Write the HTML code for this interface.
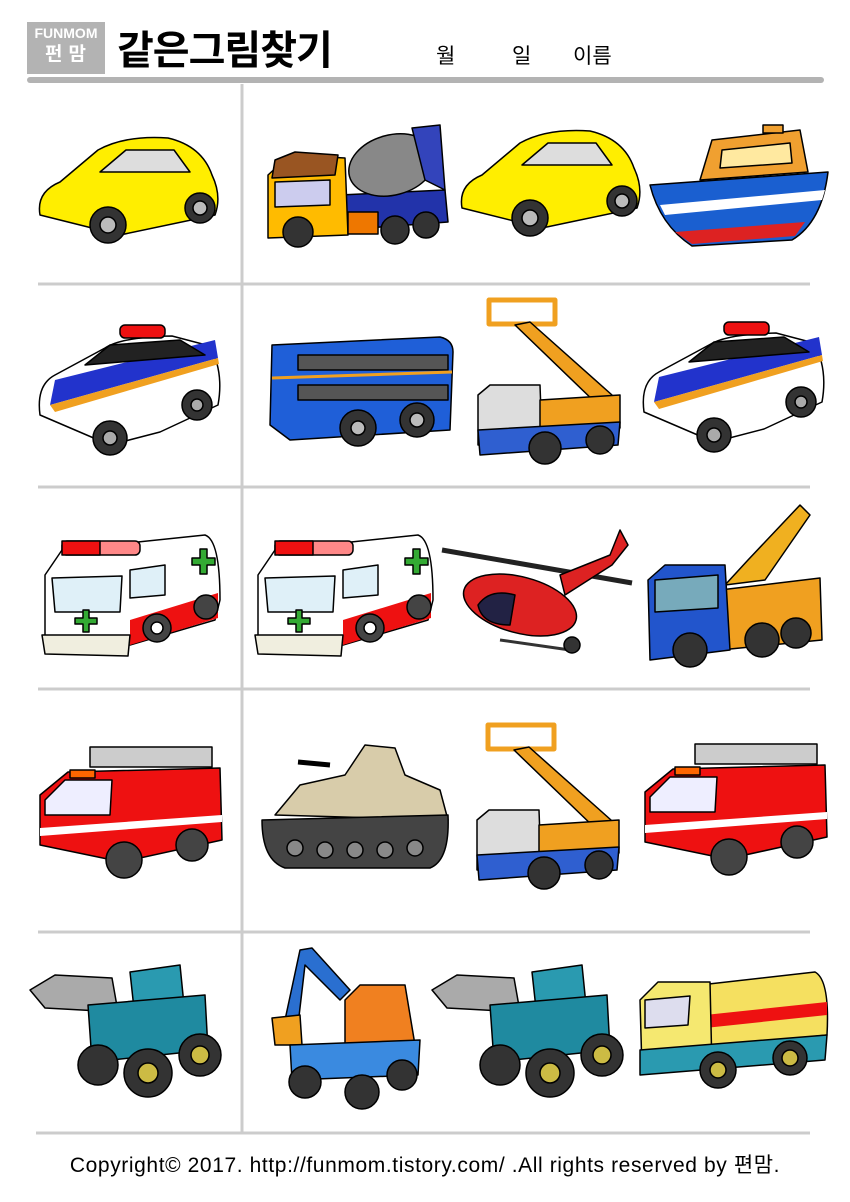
<!DOCTYPE html>
<html><head><meta charset="utf-8"><style>
body{margin:0;width:850px;height:1202px;background:#fff;position:relative;overflow:hidden;font-family:"Liberation Sans","Noto Sans CJK KR",sans-serif}
.logo{position:absolute;left:27px;top:22px;width:78px;height:52px;background:#b3b3b3;color:#fff;text-align:center}
.logo .a{font-size:14px;line-height:18px;margin-top:2px;font-weight:bold}
.logo .b{font-size:19px;font-weight:bold;letter-spacing:6px;line-height:26px;margin-left:5px}
.title{position:absolute;left:117px;top:18px;font-size:40px;font-weight:bold;letter-spacing:-1px}
.hd{position:absolute;top:40px;font-size:21px}
.foot{position:absolute;left:0;width:850px;top:1149px;text-align:center;font-size:21px;letter-spacing:0.6px}
svg{position:absolute;left:0;top:0}
</style></head><body>
<div class="logo"><div class="a">FUNMOM</div><div class="b">펀맘</div></div>
<div class="title">같은그림찾기</div>
<div class="hd" style="left:436px">월</div>
<div class="hd" style="left:512px">일</div>
<div class="hd" style="left:573px">이름</div>
<div class="foot">Copyright© 2017. http://funmom.tistory.com/ .All rights reserved by 편맘.</div>
<svg width="850" height="1202" stroke="#000" stroke-width="1.5" stroke-linejoin="round">
<rect x="27" y="77" width="797" height="6" rx="3" fill="#b3b3b3" stroke="none"/>
<g stroke="#ccc" stroke-width="3"><line x1="242" y1="84" x2="242" y2="1132"/>
<line x1="38" y1="284" x2="810" y2="284"/><line x1="38" y1="487" x2="810" y2="487"/><line x1="38" y1="689" x2="810" y2="689"/><line x1="38" y1="932" x2="810" y2="932"/><line x1="36" y1="1133" x2="810" y2="1133"/></g>

<g id="car"><path d="M40,215 Q36,192 60,182 L98,150 Q125,135 168,138 Q202,146 212,175 Q222,196 215,215 L120,235 Z" fill="#ffee00"/>
<path d="M100,172 L126,150 L174,150 L190,172 Z" fill="#ddd"/>
<circle cx="108" cy="225" r="18" fill="#333"/><circle cx="108" cy="225" r="8" fill="#bbb"/>
<circle cx="200" cy="208" r="15" fill="#333"/><circle cx="200" cy="208" r="7" fill="#bbb"/></g>
<use href="#car" transform="translate(422,-7)"/>

<path d="M340,195 L445,190 L448,222 L340,230 Z" fill="#2233aa"/>
<ellipse cx="392" cy="165" rx="44" ry="30" fill="#888" transform="rotate(-15 392 165)"/>
<path d="M412,128 L440,125 L445,190 L425,180 Z" fill="#3344bb"/>
<path d="M268,175 L290,155 L345,158 L348,235 L268,238 Z" fill="#ffbb00"/>
<path d="M275,160 L295,152 L338,155 L335,175 L272,178 Z" fill="#995522"/>
<path d="M275,182 L330,180 L330,205 L275,207 Z" fill="#cce"/>
<rect x="348" y="212" width="30" height="22" fill="#ee7700"/>
<circle cx="298" cy="232" r="15" fill="#333"/><circle cx="395" cy="230" r="14" fill="#333"/><circle cx="426" cy="225" r="13" fill="#333"/>

<path d="M650,185 L828,172 Q822,222 792,240 L692,246 Q660,225 650,185 Z" fill="#1a5fd0"/>
<path d="M660,205 L825,190 L822,200 L665,215 Z" fill="#fff" stroke="none"/>
<path d="M675,232 L805,222 L795,236 L692,244 Z" fill="#dd2222" stroke="none"/>
<path d="M700,180 L712,140 L800,130 L808,172 Z" fill="#f0a030"/>
<rect x="763" y="125" width="20" height="8" fill="#f0a030"/>
<path d="M722,150 L790,143 L792,163 L720,168 Z" fill="#ffe9a0"/>

<g id="pol"><path d="M40,415 Q36,385 55,375 L105,348 Q122,337 172,336 L210,346 Q224,372 218,405 L160,432 L110,445 Z" fill="#fff"/>
<path d="M55,380 L215,340 L218,358 L50,405 Z" fill="#2233cc" stroke="none"/>
<path d="M50,405 L218,358 L219,364 L55,412 Z" fill="#f0a020" stroke="none"/>
<path d="M85,365 L110,345 L180,340 L205,355 Z" fill="#222"/>
<rect x="120" y="325" width="45" height="13" rx="5" fill="#e11"/>
<circle cx="110" cy="438" r="17" fill="#333"/><circle cx="110" cy="438" r="7" fill="#aaa"/>
<circle cx="197" cy="405" r="15" fill="#333"/><circle cx="197" cy="405" r="6" fill="#aaa"/></g>
<use href="#pol" transform="translate(604,-3)"/>

<path d="M272,345 L440,337 Q453,340 453,352 L450,430 L290,440 L270,425 Z" fill="#1f5fd8"/>
<rect x="298" y="355" width="150" height="15" fill="#555"/>
<line x1="272" y1="378" x2="452" y2="372" stroke="#f0a020" stroke-width="3"/>
<rect x="298" y="385" width="150" height="15" fill="#555"/>
<circle cx="358" cy="428" r="18" fill="#333"/><circle cx="358" cy="428" r="7" fill="#bbb"/>
<circle cx="417" cy="420" r="17" fill="#333"/><circle cx="417" cy="420" r="7" fill="#bbb"/>

<g id="lift"><rect x="489" y="300" width="66" height="24" fill="none" stroke="#f0a020" stroke-width="5"/>
<path d="M515,325 L530,322 L612,395 L598,405 Z" fill="#f0a020"/>
<path d="M478,395 L490,385 L540,385 L542,440 L478,445 Z" fill="#ddd"/>
<path d="M540,400 L620,395 L620,428 L540,432 Z" fill="#f0a020"/>
<path d="M478,430 L620,422 L618,445 L480,455 Z" fill="#2f5fd0"/>
<circle cx="545" cy="448" r="16" fill="#333"/><circle cx="600" cy="440" r="14" fill="#333"/></g>
<use href="#lift" transform="translate(-1,425)"/>

<g id="amb"><path d="M45,575 L62,550 L205,535 Q220,540 220,600 L215,620 L130,645 L45,650 Z" fill="#fff"/>
<path d="M130,620 L218,593 L218,618 L130,645 Z" fill="#e11" stroke="none"/>
<rect x="62" y="541" width="78" height="14" rx="5" fill="#f88"/><rect x="62" y="541" width="38" height="14" fill="#e11"/>
<path d="M52,578 L122,576 L120,612 L55,612 Z" fill="#dff0f8"/>
<path d="M130,570 L165,565 L165,595 L130,598 Z" fill="#dff0f8"/>
<path d="M42,635 L130,635 L128,656 L45,654 Z" fill="#f0eedf"/>
<path d="M75,618 h8 v-8 h6 v8 h8 v6 h-8 v8 h-6 v-8 h-8 Z" fill="#3a3"/>
<path d="M192,558 h8 v-9 h7 v9 h8 v7 h-8 v9 h-7 v-9 h-8 Z" fill="#3a3"/>
<circle cx="157" cy="628" r="14" fill="#444"/><circle cx="157" cy="628" r="6" fill="#fff"/>
<circle cx="206" cy="607" r="12" fill="#444"/></g>
<use href="#amb" transform="translate(213,0)"/>

<line x1="442" y1="550" x2="632" y2="583" stroke="#222" stroke-width="5"/>
<path d="M560,575 L610,555 L620,530 L628,545 L612,565 L565,595 Z" fill="#d22"/>
<ellipse cx="520" cy="605" rx="58" ry="28" fill="#d22" transform="rotate(15 520 605)"/>
<path d="M478,605 Q490,588 515,595 L510,625 Q482,625 478,605 Z" fill="#224"/>
<line x1="500" y1="640" x2="570" y2="650" stroke="#333" stroke-width="3"/>
<circle cx="572" cy="645" r="8" fill="#333"/>

<path d="M725,585 L748,560 L800,505 L810,515 L765,580 Z" fill="#f0b020"/>
<path d="M720,590 L820,578 L822,640 L720,650 Z" fill="#f0a020"/>
<path d="M648,580 L665,565 L725,565 L730,650 L650,660 Z" fill="#2255cc"/>
<path d="M655,580 L718,575 L718,608 L655,612 Z" fill="#7ab"/>
<circle cx="690" cy="650" r="17" fill="#333"/><circle cx="762" cy="640" r="17" fill="#333"/><circle cx="796" cy="633" r="15" fill="#333"/>

<g id="fire"><rect x="90" y="747" width="122" height="20" fill="#ccc"/>
<path d="M40,795 L68,772 L220,768 L222,840 L122,862 L40,845 Z" fill="#e11"/>
<path d="M45,800 L65,780 L112,780 L110,815 L45,815 Z" fill="#eef"/>
<path d="M40,828 L222,815 L222,822 L40,836 Z" fill="#fff" stroke="none"/>
<rect x="70" y="770" width="25" height="8" fill="#f60"/>
<circle cx="124" cy="860" r="18" fill="#444"/><circle cx="192" cy="845" r="16" fill="#444"/></g>
<use href="#fire" transform="translate(605,-3)"/>

<path d="M275,815 L300,785 L345,775 L365,745 L395,748 L405,775 L440,790 L448,820 Z" fill="#d8ccaa"/>
<line x1="330" y1="765" x2="298" y2="762" stroke-width="5"/>
<path d="M262,820 L448,815 Q450,860 430,868 L285,868 Q262,860 262,820 Z" fill="#444"/>
<g fill="#888"><circle cx="295" cy="848" r="8"/><circle cx="325" cy="850" r="8"/><circle cx="355" cy="850" r="8"/><circle cx="385" cy="850" r="8"/><circle cx="415" cy="848" r="8"/></g>

<g id="load"><path d="M30,990 L55,975 L112,978 L118,1012 L45,1008 Z" fill="#aaa"/>
<path d="M130,972 L180,965 L185,1015 L135,1018 Z" fill="#2a9ab0"/>
<path d="M88,1005 L205,995 L208,1050 L92,1062 Z" fill="#1f8aa0"/>
<circle cx="98" cy="1065" r="20" fill="#333"/><circle cx="148" cy="1073" r="24" fill="#333"/><circle cx="148" cy="1073" r="10" fill="#cb4"/>
<circle cx="200" cy="1055" r="21" fill="#333"/><circle cx="200" cy="1055" r="9" fill="#cb4"/></g>
<use href="#load" transform="translate(402,0)"/>

<path d="M285,1020 L300,950 L312,948 L350,990 L340,1000 L305,965 L298,1025 Z" fill="#2a6fd0"/>
<path d="M272,1018 L300,1015 L302,1045 L275,1045 Z" fill="#f0a020"/>
<path d="M345,1000 L360,985 L405,985 L415,1045 L345,1048 Z" fill="#f08020"/>
<path d="M290,1045 L420,1040 L418,1075 L292,1080 Z" fill="#3a8ae0"/>
<circle cx="305" cy="1082" r="16" fill="#333"/><circle cx="362" cy="1092" r="17" fill="#333"/><circle cx="402" cy="1075" r="15" fill="#333"/>

<path d="M700,985 L815,972 Q830,980 827,1035 L705,1048 Z" fill="#f5e060"/>
<path d="M705,1015 L827,1002 L827,1015 L705,1028 Z" fill="#e11" stroke="none"/>
<path d="M640,1000 L658,982 L710,982 L712,1070 L642,1070 Z" fill="#f5e870"/>
<path d="M645,1000 L690,996 L688,1025 L645,1028 Z" fill="#dde"/>
<path d="M640,1050 L827,1035 L825,1060 L640,1075 Z" fill="#2a9ab0"/>
<circle cx="718" cy="1070" r="18" fill="#333"/><circle cx="718" cy="1070" r="8" fill="#cb4"/>
<circle cx="790" cy="1058" r="17" fill="#333"/><circle cx="790" cy="1058" r="8" fill="#cb4"/>
</svg>
</body></html>
